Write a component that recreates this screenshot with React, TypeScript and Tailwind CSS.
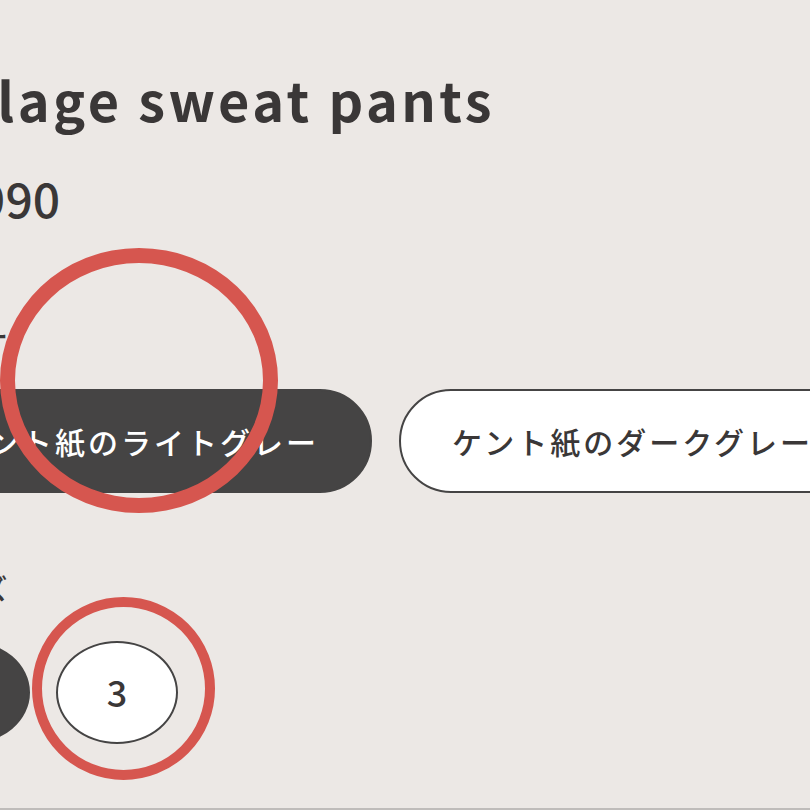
const jp = { fontFamily: '"Noto Sans CJK JP", "Noto Sans", sans-serif' };

function Ring({ className }: { className: string }) {
  return <div className={`pointer-events-none absolute rounded-[50%] border-[#d6564f] ${className}`} />;
}

export default function App() {
  return (
    <div
      className="relative h-[810px] w-[810px] overflow-hidden border-b-2 border-[#bfbcba] bg-[#ece8e5] text-[#3a3737]"
      style={jp}
    >
      <div className="flex flex-col">
        <h1 className="ml-[-80px] mt-[72px] whitespace-nowrap text-[54px] font-bold leading-none tracking-[0.064em]">
          Village sweat pants
        </h1>
        <p className="ml-[-91px] mt-[47px] whitespace-nowrap text-[48px] font-medium leading-none">¥4,990</p>

        <p className="ml-[-76px] mt-[101px] whitespace-nowrap text-[28px] font-medium leading-none">カラー</p>
        <div className="ml-[-96px] mt-[39px] flex gap-[27px]">
          <button className="flex h-[104px] shrink-0 items-center whitespace-nowrap rounded-full border-2 border-[#454444] bg-[#454444] px-[51px] text-[30px] font-medium tracking-[3px] text-white">
            ケント紙のライトグレー
          </button>
          <button className="flex h-[104px] shrink-0 items-center whitespace-nowrap rounded-full border-2 border-[#454444] bg-white px-[51px] text-[30px] font-medium tracking-[3px] text-[#3a3737]">
            ケント紙のダークグレー
          </button>
        </div>

        <p className="ml-[-76px] mt-[81px] whitespace-nowrap text-[28px] font-medium leading-none">サイズ</p>
        <div className="ml-[-92px] mt-[39px] flex gap-[26px]">
          <button className="flex h-[103px] w-[122px] shrink-0 items-center justify-center rounded-[50%] border-2 border-[#454444] bg-[#454444] pb-[4px] text-[36px] font-medium text-white">
            2
          </button>
          <button className="flex h-[103px] w-[122px] shrink-0 items-center justify-center rounded-[50%] border-2 border-[#454444] bg-white pb-[4px] text-[36px] font-medium text-[#3a3737]">
            3
          </button>
        </div>
      </div>

      <Ring className="left-0 top-[248px] h-[265px] w-[278px] border-[15px]" />
      <Ring className="left-[32px] top-[597px] h-[183px] w-[183px] border-[10px]" />
    </div>
  );
}
